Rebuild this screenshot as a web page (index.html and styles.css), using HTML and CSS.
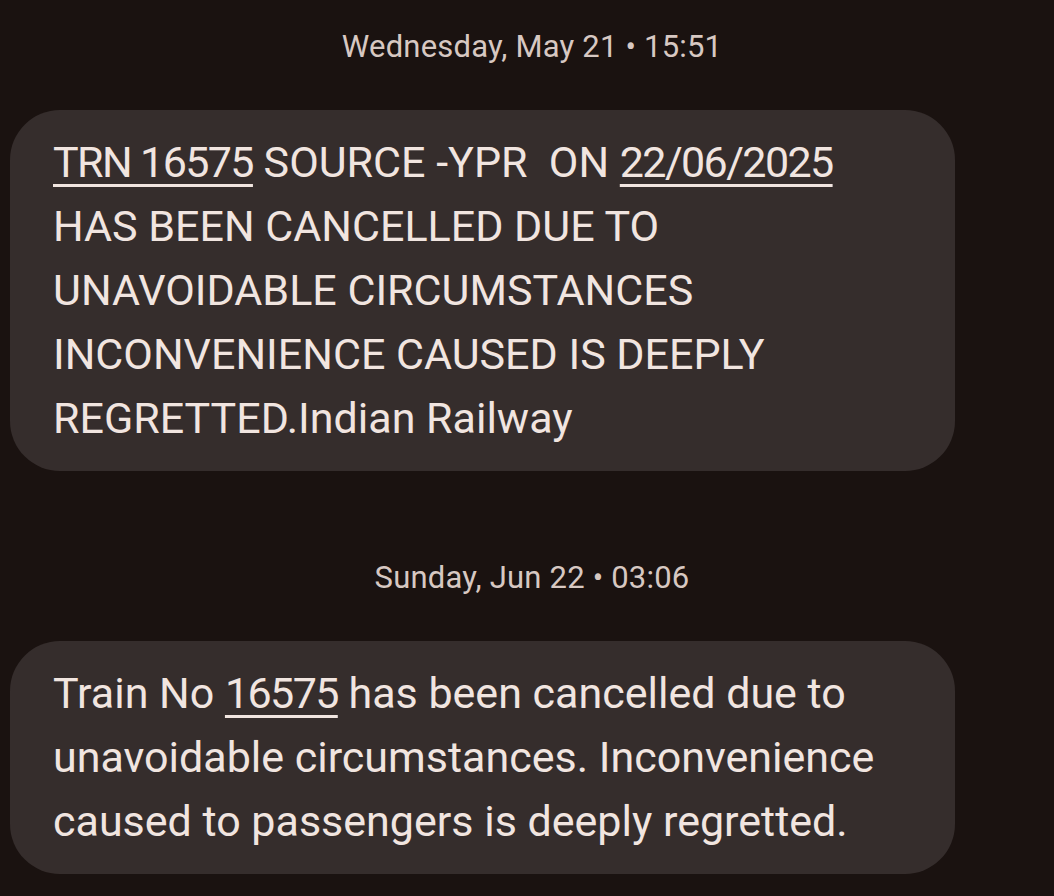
FILE: index.html
```html
<!DOCTYPE html>
<html>
<head>
<meta charset="utf-8">
<link rel="stylesheet" href="styles.css">
</head>
<body>
<div class="thread">
  <div class="date">Wednesday, May 21 • 15:51</div>
  <div class="bubble">
    <p class="msg"><span class="link num">TRN 16575</span> SOURCE -YPR&nbsp; ON <span class="link num">22/06/2025</span> HAS BEEN CANCELLED DUE TO UNAVOIDABLE CIRCUMSTANCES INCONVENIENCE CAUSED IS DEEPLY REGRETTED.Indian Railway</p>
  </div>
  <div class="date date-second">Sunday, Jun 22 • 03:06</div>
  <div class="bubble">
    <p class="msg">Train No <span class="link num">16575</span> has been cancelled due to unavoidable circumstances. Inconvenience caused to passengers is deeply regretted.</p>
  </div>
  <div class="time">00:01</div>
</div>
</body>
</html>
```
FILE: styles.css
```css
html, body {
  margin: 0;
  padding: 0;
  background: #1a1210;
  height: 100%;
  overflow: hidden;
}
.thread {
  display: flex;
  flex-direction: column;
  align-items: flex-start;
  padding: 27px 0 0 10px;
  font-family: Roboto, "Noto Sans", sans-serif;
}
.date {
  align-self: stretch;
  text-align: center;
  font-size: 31px;
  line-height: 40px;
  letter-spacing: 0.2px;
  color: #d7c8c2;
}
.date-second {
  margin-top: 87px;
}
.bubble {
  box-sizing: border-box;
  width: 945px;
  margin-top: 43px;
  padding: 20px 40px 21px 43px;
  background: #352d2c;
  border-radius: 50px;
}
.msg {
  margin: 0;
  font-size: 43px;
  line-height: 64px;
  color: #f1e5e0;
}
.link {
  text-decoration: underline;
  text-decoration-thickness: 3px;
  text-underline-offset: 7px;
}
.num {
  letter-spacing: -1.6px;
}
.time {
  margin: 14px 0 0 43px;
  font-size: 28px;
  line-height: 40px;
  color: #d7c8c2;
}
```
